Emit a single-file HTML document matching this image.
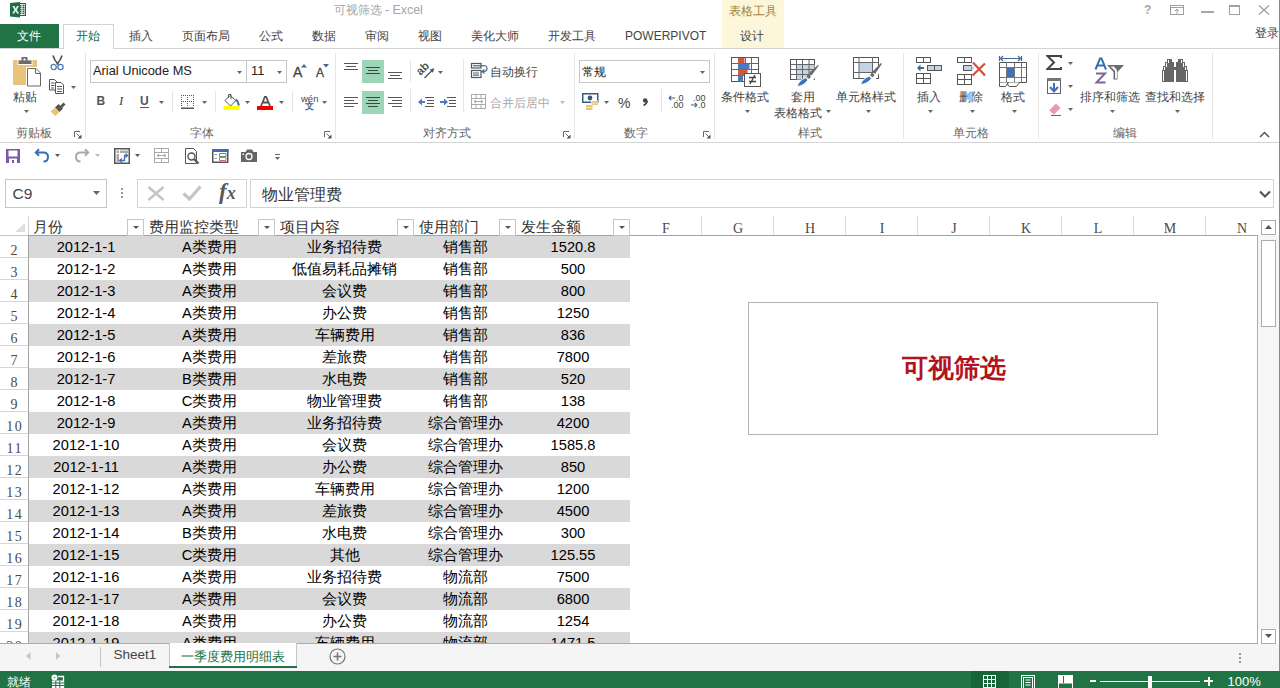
<!DOCTYPE html>
<html><head><meta charset="utf-8"><style>
html,body{margin:0;padding:0;width:1280px;height:688px;overflow:hidden;background:#fff;position:relative}
body>div,body>div>div{position:absolute}
.t{position:absolute;white-space:nowrap}
</style></head><body>
<svg style="position:absolute;left:6px;top:0px;" width="22" height="20" viewBox="0 0 22 20"><rect x="13.5" y="3.5" width="6" height="12" fill="#fff" stroke="#1d6b3e"/>
<path d="M14 5.5h1.5M16.5 5.5h2M14 7.5h1.5M16.5 7.5h2M14 9.5h1.5M16.5 9.5h2M14 11.5h1.5M16.5 11.5h2M14 13.5h1.5M16.5 13.5h2" stroke="#1d6b3e" stroke-width="1.3"/>
<path d="M4 3L14 2V17.5L4 16.5Z" fill="#1e6e41"/>
<path d="M6.3 6h2.1l1.3 2.4 1.3-2.4h2l-2.2 3.7 2.3 3.8h-2.1l-1.4-2.5-1.4 2.5h-2l2.3-3.8z" fill="#e6f5ea"/></svg>
<div class="t" style="left:333.5px;top:4px;font-size:12.4px;line-height:12.4px;color:#a5a5a5;font-family:'Liberation Sans',sans-serif;">可视筛选 - Excel</div>
<div style="left:722px;top:0px;width:62px;height:48px;background:#fcf6da"></div>
<div class="t" style="left:729px;top:5px;font-size:12px;line-height:12px;color:#a2843a;font-family:'Liberation Sans',sans-serif;">表格工具</div>
<div class="t" style="left:1144px;top:4px;font-size:12px;line-height:12px;color:#a6a6a6;font-family:'Liberation Sans',sans-serif;font-weight:bold">?</div>
<svg style="position:absolute;left:1170px;top:5px;" width="14" height="10" viewBox="0 0 14 10"><rect x="0.5" y="0.5" width="13" height="9" fill="none" stroke="#a0a0a0"/><path d="M0.5 2.5h13" stroke="#a0a0a0"/><path d="M7 4v5M5 6l2-2 2 2" stroke="#a0a0a0" fill="none"/></svg>
<div style="left:1201px;top:11px;width:13px;height:1.5px;background:#a6a6a6"></div>
<svg style="position:absolute;left:1229px;top:5px;" width="11" height="10" viewBox="0 0 11 10"><rect x="0.5" y="0.5" width="10" height="9" fill="none" stroke="#a0a0a0"/><rect x="0" y="0" width="11" height="2" fill="#a0a0a0"/></svg>
<svg style="position:absolute;left:1258px;top:5px;" width="12" height="10" viewBox="0 0 12 10"><path d="M1 0.5L11 9.5M11 0.5L1 9.5" stroke="#a0a0a0" stroke-width="1.3"/></svg>
<div style="left:0px;top:24px;width:59px;height:25px;background:#217346"></div>
<div class="t" style="left:17px;top:30px;font-size:12px;line-height:12px;color:#fff;font-family:'Liberation Sans',sans-serif;">文件</div>
<div style="left:63px;top:24px;width:51px;height:25px;background:#fff;border:1px solid #d4d4d4;border-bottom:none;box-sizing:border-box"></div>
<div class="t" style="left:76px;top:29.5px;font-size:12px;line-height:12px;color:#1f6a40;font-family:'Liberation Sans',sans-serif;">开始</div>
<div class="t" style="left:128.5px;top:30px;font-size:12px;line-height:12px;color:#444;font-family:'Liberation Sans',sans-serif;">插入</div>
<div class="t" style="left:182px;top:30px;font-size:12px;line-height:12px;color:#444;font-family:'Liberation Sans',sans-serif;">页面布局</div>
<div class="t" style="left:259px;top:30px;font-size:12px;line-height:12px;color:#444;font-family:'Liberation Sans',sans-serif;">公式</div>
<div class="t" style="left:312px;top:30px;font-size:12px;line-height:12px;color:#444;font-family:'Liberation Sans',sans-serif;">数据</div>
<div class="t" style="left:365px;top:30px;font-size:12px;line-height:12px;color:#444;font-family:'Liberation Sans',sans-serif;">审阅</div>
<div class="t" style="left:418px;top:30px;font-size:12px;line-height:12px;color:#444;font-family:'Liberation Sans',sans-serif;">视图</div>
<div class="t" style="left:471px;top:30px;font-size:12px;line-height:12px;color:#444;font-family:'Liberation Sans',sans-serif;">美化大师</div>
<div class="t" style="left:548px;top:30px;font-size:12px;line-height:12px;color:#444;font-family:'Liberation Sans',sans-serif;">开发工具</div>
<div class="t" style="left:740px;top:30px;font-size:12px;line-height:12px;color:#444;font-family:'Liberation Sans',sans-serif;">设计</div>
<div class="t" style="left:625px;top:30px;font-size:12px;line-height:12px;color:#444;font-family:'Liberation Sans',sans-serif;">POWERPIVOT</div>
<div class="t" style="left:1255px;top:27px;font-size:12px;line-height:12px;color:#444;font-family:'Liberation Sans',sans-serif;">登录</div>
<div style="left:0px;top:48px;width:63px;height:1px;background:#d4d4d4"></div>
<div style="left:114px;top:48px;width:1166px;height:1px;background:#d4d4d4"></div>
<div style="left:0px;top:142px;width:1279px;height:1px;background:#d4d4d4"></div>
<div style="left:1279px;top:0px;width:1px;height:671px;background:#8a8a8a"></div>
<div style="left:85px;top:53px;width:1px;height:86px;background:#e6e6e6"></div>
<div style="left:335px;top:53px;width:1px;height:86px;background:#e6e6e6"></div>
<div style="left:574px;top:53px;width:1px;height:86px;background:#e6e6e6"></div>
<div style="left:714px;top:53px;width:1px;height:86px;background:#e6e6e6"></div>
<div style="left:903px;top:53px;width:1px;height:86px;background:#e6e6e6"></div>
<div style="left:1038px;top:53px;width:1px;height:86px;background:#e6e6e6"></div>
<div style="left:1212px;top:53px;width:1px;height:86px;background:#e6e6e6"></div>
<div class="t" style="left:16px;top:127px;font-size:12px;line-height:12px;color:#666;font-family:'Liberation Sans',sans-serif;">剪贴板</div>
<div class="t" style="left:190px;top:127px;font-size:12px;line-height:12px;color:#666;font-family:'Liberation Sans',sans-serif;">字体</div>
<div class="t" style="left:423px;top:127px;font-size:12px;line-height:12px;color:#666;font-family:'Liberation Sans',sans-serif;">对齐方式</div>
<div class="t" style="left:624px;top:127px;font-size:12px;line-height:12px;color:#666;font-family:'Liberation Sans',sans-serif;">数字</div>
<div class="t" style="left:797.5px;top:127px;font-size:12px;line-height:12px;color:#666;font-family:'Liberation Sans',sans-serif;">样式</div>
<div class="t" style="left:953px;top:127px;font-size:12px;line-height:12px;color:#666;font-family:'Liberation Sans',sans-serif;">单元格</div>
<div class="t" style="left:1113px;top:127px;font-size:12px;line-height:12px;color:#666;font-family:'Liberation Sans',sans-serif;">编辑</div>
<svg style="position:absolute;left:74px;top:131px;" width="8" height="8" viewBox="0 0 8 8"><path d="M0.5 6V0.5H6" stroke="#666" fill="none"/><path d="M2.5 2.5L6 6" stroke="#666"/><path d="M7.5 3.5V7.5H3.5Z" fill="#555"/></svg>
<svg style="position:absolute;left:324px;top:131px;" width="8" height="8" viewBox="0 0 8 8"><path d="M0.5 6V0.5H6" stroke="#666" fill="none"/><path d="M2.5 2.5L6 6" stroke="#666"/><path d="M7.5 3.5V7.5H3.5Z" fill="#555"/></svg>
<svg style="position:absolute;left:563px;top:131px;" width="8" height="8" viewBox="0 0 8 8"><path d="M0.5 6V0.5H6" stroke="#666" fill="none"/><path d="M2.5 2.5L6 6" stroke="#666"/><path d="M7.5 3.5V7.5H3.5Z" fill="#555"/></svg>
<svg style="position:absolute;left:703px;top:131px;" width="8" height="8" viewBox="0 0 8 8"><path d="M0.5 6V0.5H6" stroke="#666" fill="none"/><path d="M2.5 2.5L6 6" stroke="#666"/><path d="M7.5 3.5V7.5H3.5Z" fill="#555"/></svg>
<svg style="position:absolute;left:12px;top:56px;" width="30" height="32" viewBox="0 0 30 32"><rect x="1" y="4" width="24" height="25" fill="#eac37a"/>
<path d="M5.5 4.5h15v4.5h-15z" fill="#fff"/><path d="M6.5 4.5h13v3.5h-13z" fill="#6b6b6b"/>
<rect x="9.5" y="1" width="6" height="4" fill="#6b6b6b"/><rect x="11.5" y="2.5" width="2" height="2" fill="#fff"/>
<path d="M14 11h10.5l5 5v16h-15.5z" fill="#fff"/>
<path d="M15.5 12.5h8.5l4.5 4.5v13h-13z" fill="#fff" stroke="#666"/><path d="M23.5 12.5v5h5" fill="none" stroke="#666"/></svg>
<div class="t" style="left:13px;top:91px;font-size:12px;line-height:12px;color:#444;font-family:'Liberation Sans',sans-serif;">粘贴</div>
<svg style="position:absolute;left:24px;top:110px;" width="5" height="3" viewBox="0 0 5 3"><path d="M0 0H5L2.5 3Z" fill="#666"/></svg>
<svg style="position:absolute;left:50px;top:55px;" width="15" height="16" viewBox="0 0 15 16"><path d="M3 0.5Q4 5 8.5 9.5M12 0.5Q11 5 6.5 9.5" stroke="#505050" stroke-width="1.6" fill="none"/>
<circle cx="3.7" cy="12" r="2.6" fill="#fff" stroke="#4a7bbd" stroke-width="1.3"/><circle cx="10.5" cy="12" r="2.6" fill="#fff" stroke="#4a7bbd" stroke-width="1.3"/></svg>
<svg style="position:absolute;left:49px;top:79px;" width="16" height="15" viewBox="0 0 16 15"><path d="M0.5 0.5h5l2.5 2.5v8h-7.5z" fill="#fff" stroke="#555"/><path d="M2 4h3.5M2 6.5h3.5M2 9h3" stroke="#555"/>
<path d="M6.5 3.5h5.5l2.5 2.5v8.5h-8z" fill="#fff" stroke="#555"/><path d="M8 7.5h5M8 10h5M8 12.5h5" stroke="#555"/></svg>
<svg style="position:absolute;left:71px;top:86px;" width="5" height="3" viewBox="0 0 5 3"><path d="M0 0H5L2.5 3Z" fill="#666"/></svg>
<svg style="position:absolute;left:50px;top:101px;" width="16" height="15" viewBox="0 0 16 15"><path d="M9.5 5.5L13.5 1.5L15.5 3.5L11.5 7.5Z" fill="#555"/><path d="M5 6.5L8.5 3L13 7.5L9.5 11Z" fill="#555"/>
<path d="M0.5 10.5L5 6.5L9.5 11L5.5 15Z" fill="#eac37a"/></svg>
<div style="left:90px;top:60px;width:157px;height:23px;background:#fff;border:1px solid #c6c6c6;box-sizing:border-box"></div>
<div style="left:246px;top:60px;width:41px;height:23px;background:#fff;border:1px solid #c6c6c6;box-sizing:border-box"></div>
<div class="t" style="left:93px;top:65px;font-size:12.8px;line-height:12.8px;color:#222;font-family:'Liberation Sans',sans-serif;">Arial Unicode MS</div>
<svg style="position:absolute;left:237px;top:71px;" width="5" height="3" viewBox="0 0 5 3"><path d="M0 0H5L2.5 3Z" fill="#666"/></svg>
<div class="t" style="left:251px;top:65px;font-size:12.8px;line-height:12.8px;color:#222;font-family:'Liberation Sans',sans-serif;">11</div>
<svg style="position:absolute;left:277px;top:71px;" width="5" height="3" viewBox="0 0 5 3"><path d="M0 0H5L2.5 3Z" fill="#666"/></svg>
<div class="t" style="left:293px;top:65px;font-size:14px;line-height:14px;color:#444;font-family:'Liberation Sans',sans-serif;-webkit-text-stroke:0.3px #444">A</div>
<svg style="position:absolute;left:301px;top:63.5px" width="6" height="4"><path d="M0 3.5H6L3 0Z" fill="#44678f"/></svg>
<div class="t" style="left:316px;top:67px;font-size:12px;line-height:12px;color:#444;font-family:'Liberation Sans',sans-serif;-webkit-text-stroke:0.3px #444">A</div>
<svg style="position:absolute;left:322.5px;top:64px" width="6" height="4"><path d="M0 0H6L3 3.5Z" fill="#44678f"/></svg>
<div class="t" style="left:96.5px;top:95px;font-size:12px;line-height:12px;color:#555;font-family:'Liberation Sans',sans-serif;font-weight:bold">B</div>
<div class="t" style="left:119px;top:95px;font-size:12px;line-height:12px;color:#444;font-family:'Liberation Sans',sans-serif;font-style:italic;font-family:Liberation Serif,serif;font-size:13px">I</div>
<div class="t" style="left:140px;top:95px;font-size:12px;line-height:12px;color:#555;font-family:'Liberation Sans',sans-serif;font-weight:bold">U</div>
<div style="left:140px;top:107px;width:9px;height:1px;background:#555"></div>
<svg style="position:absolute;left:159px;top:101px;" width="5" height="3" viewBox="0 0 5 3"><path d="M0 0H5L2.5 3Z" fill="#666"/></svg>
<div style="left:172px;top:91px;width:1px;height:21px;background:#e6e6e6"></div>
<svg style="position:absolute;left:181px;top:95px;" width="14" height="14" viewBox="0 0 14 14"><rect x="12" y="4" width="1" height="1" fill="#555"/><rect x="4" y="0" width="1" height="1" fill="#555"/><rect x="12" y="10" width="1" height="1" fill="#555"/><rect x="4" y="6" width="1" height="1" fill="#555"/><rect x="8" y="0" width="1" height="1" fill="#555"/><rect x="0" y="2" width="1" height="1" fill="#555"/><rect x="10" y="0" width="1" height="1" fill="#555"/><rect x="10" y="6" width="1" height="1" fill="#555"/><rect x="8" y="6" width="1" height="1" fill="#555"/><rect x="0" y="8" width="1" height="1" fill="#555"/><rect x="6" y="2" width="1" height="1" fill="#555"/><rect x="12" y="0" width="1" height="1" fill="#555"/><rect x="6" y="8" width="1" height="1" fill="#555"/><rect x="12" y="6" width="1" height="1" fill="#555"/><rect x="0" y="4" width="1" height="1" fill="#555"/><rect x="0" y="10" width="1" height="1" fill="#555"/><rect x="6" y="4" width="1" height="1" fill="#555"/><rect x="12" y="2" width="1" height="1" fill="#555"/><rect x="6" y="10" width="1" height="1" fill="#555"/><rect x="12" y="8" width="1" height="1" fill="#555"/><rect x="0" y="0" width="1" height="1" fill="#555"/><rect x="2" y="0" width="1" height="1" fill="#555"/><rect x="0" y="6" width="1" height="1" fill="#555"/><rect x="2" y="6" width="1" height="1" fill="#555"/><rect x="6" y="0" width="1" height="1" fill="#555"/><rect x="6" y="6" width="1" height="1" fill="#555"/><rect x="0" y="12.5" width="13" height="1.5" fill="#555"/></svg>
<svg style="position:absolute;left:202px;top:101px;" width="5" height="3" viewBox="0 0 5 3"><path d="M0 0H5L2.5 3Z" fill="#666"/></svg>
<div style="left:215px;top:91px;width:1px;height:21px;background:#e6e6e6"></div>
<svg style="position:absolute;left:223px;top:93px;" width="17" height="17" viewBox="0 0 17 17"><path d="M2 7.5L7 2.5L13 7.5L7.5 13Z" fill="#fff" stroke="#555"/><path d="M5.5 5V1.5h2.5V6" stroke="#555" fill="none"/><path d="M13 6.5q3 2.5 2.5 6" stroke="#4a6f9a" stroke-width="2.2" fill="none"/><rect x="0.5" y="13" width="16" height="4" fill="#ffff00"/></svg>
<svg style="position:absolute;left:245px;top:101px;" width="5" height="3" viewBox="0 0 5 3"><path d="M0 0H5L2.5 3Z" fill="#666"/></svg>
<svg style="position:absolute;left:257px;top:96px;" width="16" height="14" viewBox="0 0 16 14"><path d="M4 10L8 0.5H9L13 10M5.5 6.5h6" stroke="#555" stroke-width="1.8" fill="none"/><rect x="0" y="10" width="16" height="4" fill="#e00"/></svg>
<svg style="position:absolute;left:279px;top:101px;" width="5" height="3" viewBox="0 0 5 3"><path d="M0 0H5L2.5 3Z" fill="#666"/></svg>
<div style="left:292px;top:91px;width:1px;height:21px;background:#e6e6e6"></div>
<div class="t" style="left:301px;top:93.5px;font-size:9.5px;line-height:9.5px;color:#444;font-family:'Liberation Sans',sans-serif;">wén</div>
<div class="t" style="left:304.5px;top:102px;font-size:9px;line-height:9px;color:#44678f;font-family:'Liberation Sans',sans-serif;font-weight:bold">文</div>
<svg style="position:absolute;left:322px;top:101px;" width="5" height="3" viewBox="0 0 5 3"><path d="M0 0H5L2.5 3Z" fill="#666"/></svg>
<div style="left:344.0px;top:63px;width:14px;height:1px;background:#555"></div>
<div style="left:346.0px;top:66px;width:10px;height:1px;background:#555"></div>
<div style="left:344.0px;top:69px;width:14px;height:1px;background:#555"></div>
<div style="left:362px;top:60px;width:22px;height:23px;background:#9fd5b7"></div>
<div style="left:366.0px;top:67px;width:14px;height:1px;background:#3a4a40"></div>
<div style="left:368.0px;top:70px;width:10px;height:1px;background:#3a4a40"></div>
<div style="left:366.0px;top:73px;width:14px;height:1px;background:#3a4a40"></div>
<div style="left:388.0px;top:72px;width:14px;height:1px;background:#555"></div>
<div style="left:390.0px;top:75px;width:10px;height:1px;background:#555"></div>
<div style="left:388.0px;top:78px;width:14px;height:1px;background:#555"></div>
<div style="left:344px;top:97px;width:14px;height:1px;background:#555"></div>
<div style="left:344px;top:100px;width:10px;height:1px;background:#555"></div>
<div style="left:344px;top:103px;width:14px;height:1px;background:#555"></div>
<div style="left:344px;top:106px;width:10px;height:1px;background:#555"></div>
<div style="left:362px;top:91px;width:22px;height:23px;background:#9fd5b7"></div>
<div style="left:366.0px;top:97px;width:14px;height:1px;background:#3a4a40"></div>
<div style="left:368.0px;top:100px;width:10px;height:1px;background:#3a4a40"></div>
<div style="left:366.0px;top:103px;width:14px;height:1px;background:#3a4a40"></div>
<div style="left:368.0px;top:106px;width:10px;height:1px;background:#3a4a40"></div>
<div style="left:388px;top:97px;width:14px;height:1px;background:#555"></div>
<div style="left:392px;top:100px;width:10px;height:1px;background:#555"></div>
<div style="left:388px;top:103px;width:14px;height:1px;background:#555"></div>
<div style="left:392px;top:106px;width:10px;height:1px;background:#555"></div>
<div style="left:410px;top:60px;width:1px;height:22px;background:#e6e6e6"></div>
<div style="left:410px;top:89px;width:1px;height:23px;background:#e6e6e6"></div>
<svg style="position:absolute;left:417px;top:62px;" width="19" height="17" viewBox="0 0 19 17"><g transform="translate(3.5,14) rotate(-45)"><text x="0" y="0" font-size="11.5" font-family="Liberation Sans" fill="#555" style="font-weight:bold">ab</text></g><path d="M7.5 16L16 7.5" stroke="#555" stroke-width="1.3"/><path d="M17.3 6.2L12.7 7.6L15.9 10.8Z" fill="#555"/></svg>
<svg style="position:absolute;left:438px;top:71px;" width="5" height="3" viewBox="0 0 5 3"><path d="M0 0H5L2.5 3Z" fill="#666"/></svg>
<svg style="position:absolute;left:418px;top:97px;" width="16" height="10" viewBox="0 0 16 10"><path d="M7 0.5h9M9 3.5h7M9 6.5h7M7 9.5h9" stroke="#555"/><path d="M0 5L4 1.5V8.5Z" fill="#4a7bbd"/><path d="M3 5h4" stroke="#4a7bbd" stroke-width="2"/></svg>
<svg style="position:absolute;left:440px;top:97px;" width="16" height="10" viewBox="0 0 16 10"><path d="M7 0.5h9M9 3.5h7M9 6.5h7M7 9.5h9" stroke="#555"/><path d="M8 5L4 1.5V8.5Z" fill="#4a7bbd"/><path d="M0 5h5" stroke="#4a7bbd" stroke-width="2"/></svg>
<div style="left:463px;top:59px;width:1px;height:53px;background:#e6e6e6"></div>
<svg style="position:absolute;left:470px;top:62px;" width="18" height="17" viewBox="0 0 18 17"><rect x="1.5" y="1.5" width="9.5" height="4.5" fill="#fff" stroke="#555" stroke-width="1.2"/><path d="M3 3.75h12.5" stroke="#44678f" stroke-width="1.2"/><rect x="1.5" y="8.5" width="9.5" height="7" fill="#fff" stroke="#555" stroke-width="1.2"/><path d="M3 11h6M3 13.2h6" stroke="#44678f" stroke-width="1.2"/><path d="M15.5 3.75Q17 4 17 6.5Q17 9.5 13.5 9.5H12.5" stroke="#44678f" stroke-width="1.2" fill="none"/><path d="M14.5 7.5L12 9.5L14.5 11.5" stroke="#44678f" stroke-width="1.2" fill="none"/></svg>
<div class="t" style="left:490px;top:65.5px;font-size:12px;line-height:12px;color:#444;font-family:'Liberation Sans',sans-serif;">自动换行</div>
<svg style="position:absolute;left:471px;top:94px;" width="15" height="15" viewBox="0 0 15 15"><rect x="0.5" y="0.5" width="14" height="14" fill="#fff" stroke="#aaa"/><path d="M0.5 4.5h14M0.5 10.5h14M5 0.5v4M10 0.5v4M5 10.5v4M10 10.5v4M3 7.5h9M3 7.5l2-1.5M3 7.5l2 1.5M12 7.5l-2-1.5M12 7.5l-2 1.5" stroke="#aaa" fill="none"/></svg>
<div class="t" style="left:490px;top:97px;font-size:12px;line-height:12px;color:#a8a8a8;font-family:'Liberation Sans',sans-serif;">合并后居中</div>
<svg style="position:absolute;left:560px;top:101px;" width="5" height="3" viewBox="0 0 5 3"><path d="M0 0H5L2.5 3Z" fill="#bbb"/></svg>
<div style="left:579px;top:60px;width:131px;height:23px;background:#fff;border:1px solid #c6c6c6;box-sizing:border-box"></div>
<div class="t" style="left:582px;top:66px;font-size:12px;line-height:12px;color:#222;font-family:'Liberation Sans',sans-serif;">常规</div>
<svg style="position:absolute;left:700px;top:71px;" width="5" height="3" viewBox="0 0 5 3"><path d="M0 0H5L2.5 3Z" fill="#666"/></svg>
<svg style="position:absolute;left:582px;top:93px;" width="17" height="18" viewBox="0 0 17 18"><rect x="0.75" y="0.75" width="15" height="8.5" fill="#fff" stroke="#3a5a80" stroke-width="1.5"/><circle cx="8" cy="5" r="2.4" fill="#3a5a80"/><rect x="9" y="7.5" width="7" height="4.5" fill="#fff"/><rect x="9.5" y="8" width="6.5" height="4" fill="#e8c37a"/><rect x="3.5" y="11.5" width="7" height="6" fill="#fff"/><rect x="4" y="12" width="6.5" height="5" fill="#e8c37a"/><path d="M9.5 10h6.5M4 14.5h6.5" stroke="#fbeecf" stroke-width="0.8"/></svg>
<svg style="position:absolute;left:604px;top:101px;" width="5" height="3" viewBox="0 0 5 3"><path d="M0 0H5L2.5 3Z" fill="#666"/></svg>
<div class="t" style="left:618px;top:96px;font-size:14px;line-height:14px;color:#444;font-family:'Liberation Sans',sans-serif;">%</div>
<svg style="position:absolute;left:642px;top:98px;" width="6" height="8" viewBox="0 0 6 8"><circle cx="3.2" cy="2.5" r="2.3" fill="#444"/><path d="M5.2 3Q5 6 1.5 7.5" stroke="#444" stroke-width="1.6" fill="none"/></svg>
<div style="left:661px;top:89px;width:1px;height:23px;background:#e6e6e6"></div>
<svg style="position:absolute;left:668px;top:94px;" width="17" height="15" viewBox="0 0 17 15"><text x="8" y="7" font-size="9" font-family="Liberation Sans" fill="#444">.0</text><text x="3" y="14" font-size="9" font-family="Liberation Sans" fill="#444">.00</text><path d="M1 4h6M1 4l2.2-2.2M1 4l2.2 2.2" stroke="#44678f" stroke-width="1.2" fill="none"/></svg>
<svg style="position:absolute;left:690px;top:94px;" width="17" height="15" viewBox="0 0 17 15"><text x="3" y="7" font-size="9" font-family="Liberation Sans" fill="#444">.00</text><text x="8" y="14" font-size="9" font-family="Liberation Sans" fill="#444">.0</text><path d="M1 11h6M7 11l-2.2-2.2M7 11l-2.2 2.2" stroke="#44678f" stroke-width="1.2" fill="none"/></svg>
<svg style="position:absolute;left:730px;top:56px;" width="32" height="32" viewBox="0 0 32 32"><rect x="1.5" y="1.5" width="27" height="24" fill="#fff" stroke="#555"/>
<path d="M1.5 7.5h27M1.5 13.5h27M1.5 19.5h27M8.5 1.5v24M15.5 1.5v24M21.5 1.5v24" stroke="#666"/>
<rect x="8" y="2" width="6.5" height="5.5" fill="#d5573b"/><rect x="8" y="8" width="11.5" height="5.5" fill="#4a7bbd"/><rect x="8" y="14" width="9.5" height="5.5" fill="#d5573b"/><rect x="8" y="20" width="5" height="5.5" fill="#4a7bbd"/>
<rect x="14.5" y="17.5" width="16" height="13" fill="#fff" stroke="#555"/>
<path d="M19 21.5h7M19 25.5h7M25 19L20 28" stroke="#444" stroke-width="1.3"/></svg>
<div class="t" style="left:721px;top:91px;font-size:12px;line-height:12px;color:#444;font-family:'Liberation Sans',sans-serif;">条件格式</div>
<svg style="position:absolute;left:745px;top:110px;" width="5" height="3" viewBox="0 0 5 3"><path d="M0 0H5L2.5 3Z" fill="#666"/></svg>
<svg style="position:absolute;left:789px;top:58px;" width="32" height="30" viewBox="0 0 32 30"><rect x="1.5" y="1.5" width="24" height="20" fill="#fff" stroke="#555"/>
<rect x="7.5" y="6.5" width="18" height="15" fill="#c5d3e3"/>
<path d="M1.5 6.5h24M1.5 11.5h24M1.5 16.5h24M7.5 1.5v20M13.5 1.5v20M20 1.5v20" stroke="#666"/>
<path d="M18 22L22 26L30 12V5Z" fill="#fff"/>
<path d="M22.5 17.5L29.5 8V6.5L20 15Z" fill="#6b6b6b"/><path d="M19.5 16L22 18.5L20 21L17.5 18.5Z" fill="#6b6b6b"/>
<path d="M17 19.5Q10 22 8 28.5Q15 28 19 22Z" fill="#3d72b5" stroke="#fff" stroke-width="1"/></svg>
<div class="t" style="left:791px;top:91px;font-size:12px;line-height:12px;color:#444;font-family:'Liberation Sans',sans-serif;">套用</div>
<div class="t" style="left:774px;top:107px;font-size:12px;line-height:12px;color:#444;font-family:'Liberation Sans',sans-serif;">表格格式</div>
<svg style="position:absolute;left:826px;top:110px;" width="5" height="3" viewBox="0 0 5 3"><path d="M0 0H5L2.5 3Z" fill="#666"/></svg>
<svg style="position:absolute;left:852px;top:56px;" width="32" height="30" viewBox="0 0 32 30"><rect x="1.5" y="1.5" width="25" height="21" fill="#fff" stroke="#555"/>
<rect x="7" y="6.5" width="13.5" height="10" fill="#c5d3e3"/>
<path d="M1.5 6.5h25M1.5 16.5h25M7 1.5v21M20.5 1.5v21" stroke="#666"/>
<path d="M18 22L22 26L30 12V5Z" fill="#fff"/>
<path d="M23 18L29.5 8.5V6.5L20.5 15.5Z" fill="#6b6b6b"/><path d="M20 16.5L22.5 19L20.5 21.5L18 19Z" fill="#6b6b6b"/>
<path d="M17.5 20Q10.5 22.5 8.5 28.5Q15.5 28 19.5 22.5Z" fill="#3d72b5" stroke="#fff" stroke-width="1"/></svg>
<div class="t" style="left:836px;top:91px;font-size:12px;line-height:12px;color:#444;font-family:'Liberation Sans',sans-serif;">单元格样式</div>
<svg style="position:absolute;left:866px;top:110px;" width="5" height="3" viewBox="0 0 5 3"><path d="M0 0H5L2.5 3Z" fill="#666"/></svg>
<svg style="position:absolute;left:915px;top:56px;" width="28" height="29" viewBox="0 0 28 29"><rect x="1.5" y="1.5" width="14" height="5" fill="#fff" stroke="#555"/><path d="M8.5 1.5v5" stroke="#555"/>
<rect x="12.5" y="9.5" width="14" height="5" fill="#c5d3e3" stroke="#555"/><path d="M19.5 9.5v5" stroke="#555"/>
<path d="M3 12h6" stroke="#44678f" stroke-width="2"/><path d="M2 12L5.5 8.5V15.5Z" fill="#44678f"/>
<rect x="1.5" y="17.5" width="14" height="10" fill="#fff" stroke="#555"/><path d="M1.5 22.5h14M8.5 17.5v10" stroke="#555"/></svg>
<div class="t" style="left:917px;top:91px;font-size:12px;line-height:12px;color:#444;font-family:'Liberation Sans',sans-serif;">插入</div>
<svg style="position:absolute;left:928px;top:110px;" width="5" height="3" viewBox="0 0 5 3"><path d="M0 0H5L2.5 3Z" fill="#666"/></svg>
<svg style="position:absolute;left:956px;top:56px;" width="31" height="30" viewBox="0 0 31 30"><rect x="1.5" y="1.5" width="14" height="5" fill="#fff" stroke="#555"/><path d="M8.5 1.5v5" stroke="#555"/>
<rect x="7.5" y="9.5" width="8" height="5" fill="#c5d3e3" stroke="#555"/><path d="M15.5 9.5L19 12L15.5 14.5" fill="#c5d3e3"/>
<rect x="1.5" y="18.5" width="14" height="10" fill="#fff" stroke="#555"/><path d="M1.5 23.5h14M8.5 18.5v10" stroke="#555"/>
<path d="M17 6.5L29 19.5M29 7.5L16.5 19.5" stroke="#d5503e" stroke-width="2.3"/></svg>
<div class="t" style="left:959px;top:91px;font-size:12px;line-height:12px;color:#444;font-family:'Liberation Sans',sans-serif;">删除</div>
<svg style="position:absolute;left:970px;top:110px;" width="5" height="3" viewBox="0 0 5 3"><path d="M0 0H5L2.5 3Z" fill="#666"/></svg>
<svg style="position:absolute;left:998px;top:55px;" width="30" height="32" viewBox="0 0 30 32"><path d="M1.5 1v5M23.5 1v5M2 3.5h21" stroke="#44678f" stroke-width="1.2"/><path d="M5 1L2.5 3.5L5 6M20 1L22.5 3.5L20 6" stroke="#44678f" stroke-width="1.2" fill="none"/>
<path d="M1.5 7.5h27v20h-27z" fill="#fff" stroke="#555"/>
<path d="M1.5 12.5h27M1.5 22.5h27M8.5 7.5v20M16.5 7.5v20M23.5 7.5v20" stroke="#777"/>
<rect x="9" y="13" width="7" height="9" fill="#3d72b5"/>
<path d="M1.5 27.5v4h6l3-4M9.5 27.5q0 4 2 4h7l3-4" stroke="#555" fill="#fff"/></svg>
<div class="t" style="left:1001px;top:91px;font-size:12px;line-height:12px;color:#444;font-family:'Liberation Sans',sans-serif;">格式</div>
<svg style="position:absolute;left:1012px;top:110px;" width="5" height="3" viewBox="0 0 5 3"><path d="M0 0H5L2.5 3Z" fill="#666"/></svg>
<svg style="position:absolute;left:1046px;top:55px;" width="16" height="15" viewBox="0 0 16 15"><path d="M15 3V1H1.5L8 7.5L1.5 14H15V12" stroke="#444" stroke-width="2" fill="none" stroke-linejoin="miter"/></svg>
<svg style="position:absolute;left:1068px;top:62px;" width="5" height="3" viewBox="0 0 5 3"><path d="M0 0H5L2.5 3Z" fill="#666"/></svg>
<svg style="position:absolute;left:1047px;top:78px;" width="15" height="17" viewBox="0 0 15 17"><rect x="0.5" y="0.5" width="13" height="15" fill="#fff" stroke="#666"/><rect x="0" y="0" width="14" height="3" fill="#777"/><path d="M7 5v8" stroke="#3d72b5" stroke-width="2"/><path d="M3 9l4 4.5 4-4.5" stroke="#3d72b5" stroke-width="2" fill="none"/></svg>
<svg style="position:absolute;left:1068px;top:85px;" width="5" height="3" viewBox="0 0 5 3"><path d="M0 0H5L2.5 3Z" fill="#666"/></svg>
<svg style="position:absolute;left:1047px;top:101px;" width="15" height="15" viewBox="0 0 15 15"><path d="M2 9.5L9 2.5L13.5 7L6.5 14Z" fill="#eb99ad"/><path d="M2 9.5L6.5 14" stroke="#fff" stroke-width="1"/><path d="M4 14.5h10" stroke="#666"/></svg>
<svg style="position:absolute;left:1068px;top:108px;" width="5" height="3" viewBox="0 0 5 3"><path d="M0 0H5L2.5 3Z" fill="#666"/></svg>
<svg style="position:absolute;left:1094px;top:57px;" width="31" height="28" viewBox="0 0 31 28"><path d="M1.5 12.5L6 1.5H7.5L12 12.5M3.5 8.5h6.5" stroke="#3a6fb7" stroke-width="2" fill="none"/>
<path d="M2 16.5h9L2.5 25.5h9" stroke="#8064a2" stroke-width="2" fill="none"/>
<path d="M13 8h17l-6.5 7v7.5h-4V15z" fill="#6b6b6b"/><path d="M16.5 9.5h3.5l3 3.5v8.5h-2V14z" fill="#fff" opacity="0.9"/></svg>
<div class="t" style="left:1080px;top:91px;font-size:12px;line-height:12px;color:#444;font-family:'Liberation Sans',sans-serif;">排序和筛选</div>
<svg style="position:absolute;left:1110px;top:110px;" width="5" height="3" viewBox="0 0 5 3"><path d="M0 0H5L2.5 3Z" fill="#666"/></svg>
<svg style="position:absolute;left:1161px;top:58px;" width="28" height="25" viewBox="0 0 28 25"><rect x="6" y="1" width="5" height="4" fill="#666"/><rect x="17" y="1" width="5" height="4" fill="#666"/>
<rect x="4" y="4" width="9" height="5" fill="#666"/><rect x="15" y="4" width="9" height="5" fill="#666"/>
<rect x="2" y="8" width="11" height="5" fill="#666"/><rect x="15" y="8" width="11" height="5" fill="#666"/>
<rect x="1" y="12" width="12" height="12" fill="#666"/><rect x="15" y="12" width="12" height="12" fill="#666"/>
<rect x="12" y="9" width="4" height="3" fill="#666"/>
<path d="M2.5 13v10M5.5 5v4M25.5 13v10M22.5 5v4M7.5 2v3M20.5 2v3M3.5 9v3M24.5 9v3" stroke="#fff"/></svg>
<div class="t" style="left:1145px;top:91px;font-size:12px;line-height:12px;color:#444;font-family:'Liberation Sans',sans-serif;">查找和选择</div>
<svg style="position:absolute;left:1175px;top:110px;" width="5" height="3" viewBox="0 0 5 3"><path d="M0 0H5L2.5 3Z" fill="#666"/></svg>
<svg style="position:absolute;left:1259px;top:131px;" width="11" height="7" viewBox="0 0 11 7"><path d="M1 6L5.5 1.5L10 6" stroke="#555" stroke-width="1.5" fill="none"/></svg>
<svg style="position:absolute;left:6px;top:149px;" width="14" height="14" viewBox="0 0 14 14"><path d="M0 0h14v14H0z" fill="#7b59a4"/><rect x="2.5" y="1.5" width="9" height="6" fill="#fff"/><rect x="3" y="9.5" width="8" height="4.5" fill="#fff"/><rect x="6" y="11" width="2" height="3" fill="#7b59a4"/></svg>
<svg style="position:absolute;left:34px;top:148px;" width="16" height="15" viewBox="0 0 16 15"><path d="M5 1.2L1.8 4.5L5 7.8" stroke="#3a6fb7" stroke-width="2" fill="none"/><path d="M2.5 4.5h7q4.5 0 4.5 4.5t-4.5 4.5" stroke="#3a6fb7" stroke-width="2" fill="none"/></svg>
<svg style="position:absolute;left:55px;top:154px;" width="5" height="3" viewBox="0 0 5 3"><path d="M0 0H5L2.5 3Z" fill="#555"/></svg>
<svg style="position:absolute;left:75px;top:148px;" width="15" height="15" viewBox="0 0 15 15"><path d="M10 1.2L13.2 4.5L10 7.8" stroke="#aaa" stroke-width="2" fill="none"/><path d="M12.5 4.5h-7q-4.5 0-4.5 4.5t4.5 4.5" stroke="#aaa" stroke-width="2" fill="none"/></svg>
<svg style="position:absolute;left:95px;top:154px;" width="5" height="3" viewBox="0 0 5 3"><path d="M0 0H5L2.5 3Z" fill="#bbb"/></svg>
<svg style="position:absolute;left:114px;top:148px;" width="17" height="16" viewBox="0 0 17 16"><rect x="0.75" y="0.75" width="14.5" height="14.5" fill="#fff" stroke="#555" stroke-width="1.5"/><rect x="2.5" y="2.5" width="2.5" height="2.5" fill="#aaa"/><rect x="6" y="2.5" width="8" height="2.5" fill="#aaa"/><rect x="2.5" y="6" width="2.5" height="8" fill="#aaa"/><path d="M6 12.5h4.5v-5h3" stroke="#3a6fb7" stroke-width="1.3" fill="none"/><path d="M8 10.5L5.5 12.5L8 14.5M11.5 5.5L13.5 7.5L11.5 9.5" stroke="#3a6fb7" stroke-width="1.2" fill="none"/></svg>
<svg style="position:absolute;left:135px;top:154px;" width="5" height="3" viewBox="0 0 5 3"><path d="M0 0H5L2.5 3Z" fill="#555"/></svg>
<svg style="position:absolute;left:154px;top:148px;" width="16" height="16" viewBox="0 0 16 16"><rect x="0.5" y="0.5" width="14" height="14" fill="#fff" stroke="#aaa"/><path d="M0.5 4.5h14M0.5 10.5h14M7.5 0.5v4M7.5 10.5v4M3 7.5h9M3 7.5l2-1.5M3 7.5l2 1.5M12 7.5l-2-1.5M12 7.5l-2 1.5" stroke="#aaa" fill="none"/></svg>
<svg style="position:absolute;left:184px;top:148px;" width="16" height="17" viewBox="0 0 16 17"><path d="M1.5 0.5h8l3 3v12h-11z" fill="#fff" stroke="#555"/><circle cx="7.5" cy="8.5" r="3.5" fill="#fff" stroke="#555" stroke-width="1.4"/><path d="M10 11L14.5 15.5" stroke="#555" stroke-width="2.2"/></svg>
<svg style="position:absolute;left:212px;top:149px;" width="17" height="14" viewBox="0 0 17 14"><rect x="0.75" y="0.75" width="15" height="12.5" fill="#fff" stroke="#555" stroke-width="1.5"/><rect x="0" y="0" width="16.5" height="3" fill="#3a6fb7"/><path d="M2.5 5.5h2.5M2.5 9.5h2.5" stroke="#999"/><path d="M7.5 4.5h6.5v3h-6.5z" stroke="#5a9a6a" fill="none"/><path d="M7.5 8.5h6.5v3h-6.5z" stroke="#d06a8a" fill="none"/></svg>
<svg style="position:absolute;left:241px;top:149px;" width="17" height="13" viewBox="0 0 17 13"><path d="M0 3h4.5l1.5-2.5h5L12.5 3H16v10H0z" fill="#666"/><circle cx="8" cy="7.5" r="3" fill="none" stroke="#fff" stroke-width="1.3"/><rect x="1.5" y="4.5" width="1.5" height="1.5" fill="#fff"/></svg>
<svg style="position:absolute;left:275px;top:154px;" width="6" height="7" viewBox="0 0 6 7"><path d="M0 0.5h5" stroke="#666"/><path d="M0 3H5L2.5 6Z" fill="#666"/></svg>
<div style="left:5px;top:179px;width:102px;height:29px;background:#fff;border:1px solid #c6c6c6;box-sizing:border-box"></div>
<div class="t" style="left:12.5px;top:186px;font-size:15.5px;line-height:15.5px;color:#444;font-family:'Liberation Sans',sans-serif;">C9</div>
<svg style="position:absolute;left:93px;top:191px;" width="7" height="4" viewBox="0 0 7 4"><path d="M0 0H7L3.5 4Z" fill="#666"/></svg>
<div style="left:121px;top:188px;width:2px;height:2px;background:#999"></div>
<div style="left:121px;top:192px;width:2px;height:2px;background:#999"></div>
<div style="left:121px;top:196px;width:2px;height:2px;background:#999"></div>
<div style="left:137px;top:179px;width:110px;height:29px;background:#fff;border:1px solid #d4d4d4;box-sizing:border-box"></div>
<svg style="position:absolute;left:147px;top:186px;" width="18" height="15" viewBox="0 0 18 15"><path d="M1.5 1L16.5 14M16.5 1L1.5 14" stroke="#c4c4c4" stroke-width="2.6"/></svg>
<svg style="position:absolute;left:182px;top:185px;" width="20" height="16" viewBox="0 0 20 16"><path d="M1.5 8.5L7.5 14L18.5 1.5" stroke="#c4c4c4" stroke-width="3.2" fill="none"/></svg>
<div class="t" style="left:219px;top:180px;font-size:23px;line-height:23px;color:#5a5a5a;font-family:'Liberation Sans',sans-serif;font-family:Liberation Serif,serif;font-weight:bold"><i>f</i><i style="font-size:18px">x</i></div>
<div style="left:250px;top:179px;width:1024px;height:29px;background:#fff;border:1px solid #d4d4d4;box-sizing:border-box"></div>
<div class="t" style="left:262px;top:186.5px;font-size:16px;line-height:16px;color:#333;font-family:'Liberation Sans',sans-serif;">物业管理费</div>
<svg style="position:absolute;left:1259px;top:190px;" width="12" height="9" viewBox="0 0 12 9"><path d="M1 1.5L6 6.5L11 1.5" stroke="#555" stroke-width="2.2" fill="none"/></svg>
<div style="left:0;top:0;width:1258px;height:643px;overflow:hidden;position:absolute">
<div style="left:28px;top:236px;width:602px;height:22px;background:#d9d9d9"></div>
<div style="left:0px;top:257px;width:28px;height:1px;background:#d6d6d6"></div>
<div class="t" style="left:0.75px;top:240px;width:28px;text-align:center;font-size:14px;line-height:22px;color:#4a4a4a;font-family:'Liberation Serif',serif;letter-spacing:1.5px">2</div>
<div class="t" style="left:8.0px;top:236px;width:156px;text-align:center;font-size:14.67px;line-height:22px;color:#000;font-family:'Liberation Sans',sans-serif;">2012-1-1</div>
<div class="t" style="left:124.0px;top:236px;width:171px;text-align:center;font-size:14.67px;line-height:22px;color:#000;font-family:'Liberation Sans',sans-serif;">A类费用</div>
<div class="t" style="left:255.0px;top:236px;width:179px;text-align:center;font-size:14.67px;line-height:22px;color:#000;font-family:'Liberation Sans',sans-serif;">业务招待费</div>
<div class="t" style="left:394.0px;top:236px;width:142px;text-align:center;font-size:14.67px;line-height:22px;color:#000;font-family:'Liberation Sans',sans-serif;">销售部</div>
<div class="t" style="left:496.0px;top:236px;width:154px;text-align:center;font-size:14.67px;line-height:22px;color:#000;font-family:'Liberation Sans',sans-serif;">1520.8</div>
<div style="left:0px;top:279px;width:28px;height:1px;background:#d6d6d6"></div>
<div class="t" style="left:0.75px;top:262px;width:28px;text-align:center;font-size:14px;line-height:22px;color:#4a4a4a;font-family:'Liberation Serif',serif;letter-spacing:1.5px">3</div>
<div class="t" style="left:8.0px;top:258px;width:156px;text-align:center;font-size:14.67px;line-height:22px;color:#000;font-family:'Liberation Sans',sans-serif;">2012-1-2</div>
<div class="t" style="left:124.0px;top:258px;width:171px;text-align:center;font-size:14.67px;line-height:22px;color:#000;font-family:'Liberation Sans',sans-serif;">A类费用</div>
<div class="t" style="left:255.0px;top:258px;width:179px;text-align:center;font-size:14.67px;line-height:22px;color:#000;font-family:'Liberation Sans',sans-serif;">低值易耗品摊销</div>
<div class="t" style="left:394.0px;top:258px;width:142px;text-align:center;font-size:14.67px;line-height:22px;color:#000;font-family:'Liberation Sans',sans-serif;">销售部</div>
<div class="t" style="left:496.0px;top:258px;width:154px;text-align:center;font-size:14.67px;line-height:22px;color:#000;font-family:'Liberation Sans',sans-serif;">500</div>
<div style="left:28px;top:280px;width:602px;height:22px;background:#d9d9d9"></div>
<div style="left:0px;top:301px;width:28px;height:1px;background:#d6d6d6"></div>
<div class="t" style="left:0.75px;top:284px;width:28px;text-align:center;font-size:14px;line-height:22px;color:#4a4a4a;font-family:'Liberation Serif',serif;letter-spacing:1.5px">4</div>
<div class="t" style="left:8.0px;top:280px;width:156px;text-align:center;font-size:14.67px;line-height:22px;color:#000;font-family:'Liberation Sans',sans-serif;">2012-1-3</div>
<div class="t" style="left:124.0px;top:280px;width:171px;text-align:center;font-size:14.67px;line-height:22px;color:#000;font-family:'Liberation Sans',sans-serif;">A类费用</div>
<div class="t" style="left:255.0px;top:280px;width:179px;text-align:center;font-size:14.67px;line-height:22px;color:#000;font-family:'Liberation Sans',sans-serif;">会议费</div>
<div class="t" style="left:394.0px;top:280px;width:142px;text-align:center;font-size:14.67px;line-height:22px;color:#000;font-family:'Liberation Sans',sans-serif;">销售部</div>
<div class="t" style="left:496.0px;top:280px;width:154px;text-align:center;font-size:14.67px;line-height:22px;color:#000;font-family:'Liberation Sans',sans-serif;">800</div>
<div style="left:0px;top:323px;width:28px;height:1px;background:#d6d6d6"></div>
<div class="t" style="left:0.75px;top:306px;width:28px;text-align:center;font-size:14px;line-height:22px;color:#4a4a4a;font-family:'Liberation Serif',serif;letter-spacing:1.5px">5</div>
<div class="t" style="left:8.0px;top:302px;width:156px;text-align:center;font-size:14.67px;line-height:22px;color:#000;font-family:'Liberation Sans',sans-serif;">2012-1-4</div>
<div class="t" style="left:124.0px;top:302px;width:171px;text-align:center;font-size:14.67px;line-height:22px;color:#000;font-family:'Liberation Sans',sans-serif;">A类费用</div>
<div class="t" style="left:255.0px;top:302px;width:179px;text-align:center;font-size:14.67px;line-height:22px;color:#000;font-family:'Liberation Sans',sans-serif;">办公费</div>
<div class="t" style="left:394.0px;top:302px;width:142px;text-align:center;font-size:14.67px;line-height:22px;color:#000;font-family:'Liberation Sans',sans-serif;">销售部</div>
<div class="t" style="left:496.0px;top:302px;width:154px;text-align:center;font-size:14.67px;line-height:22px;color:#000;font-family:'Liberation Sans',sans-serif;">1250</div>
<div style="left:28px;top:324px;width:602px;height:22px;background:#d9d9d9"></div>
<div style="left:0px;top:345px;width:28px;height:1px;background:#d6d6d6"></div>
<div class="t" style="left:0.75px;top:328px;width:28px;text-align:center;font-size:14px;line-height:22px;color:#4a4a4a;font-family:'Liberation Serif',serif;letter-spacing:1.5px">6</div>
<div class="t" style="left:8.0px;top:324px;width:156px;text-align:center;font-size:14.67px;line-height:22px;color:#000;font-family:'Liberation Sans',sans-serif;">2012-1-5</div>
<div class="t" style="left:124.0px;top:324px;width:171px;text-align:center;font-size:14.67px;line-height:22px;color:#000;font-family:'Liberation Sans',sans-serif;">A类费用</div>
<div class="t" style="left:255.0px;top:324px;width:179px;text-align:center;font-size:14.67px;line-height:22px;color:#000;font-family:'Liberation Sans',sans-serif;">车辆费用</div>
<div class="t" style="left:394.0px;top:324px;width:142px;text-align:center;font-size:14.67px;line-height:22px;color:#000;font-family:'Liberation Sans',sans-serif;">销售部</div>
<div class="t" style="left:496.0px;top:324px;width:154px;text-align:center;font-size:14.67px;line-height:22px;color:#000;font-family:'Liberation Sans',sans-serif;">836</div>
<div style="left:0px;top:367px;width:28px;height:1px;background:#d6d6d6"></div>
<div class="t" style="left:0.75px;top:350px;width:28px;text-align:center;font-size:14px;line-height:22px;color:#4a4a4a;font-family:'Liberation Serif',serif;letter-spacing:1.5px">7</div>
<div class="t" style="left:8.0px;top:346px;width:156px;text-align:center;font-size:14.67px;line-height:22px;color:#000;font-family:'Liberation Sans',sans-serif;">2012-1-6</div>
<div class="t" style="left:124.0px;top:346px;width:171px;text-align:center;font-size:14.67px;line-height:22px;color:#000;font-family:'Liberation Sans',sans-serif;">A类费用</div>
<div class="t" style="left:255.0px;top:346px;width:179px;text-align:center;font-size:14.67px;line-height:22px;color:#000;font-family:'Liberation Sans',sans-serif;">差旅费</div>
<div class="t" style="left:394.0px;top:346px;width:142px;text-align:center;font-size:14.67px;line-height:22px;color:#000;font-family:'Liberation Sans',sans-serif;">销售部</div>
<div class="t" style="left:496.0px;top:346px;width:154px;text-align:center;font-size:14.67px;line-height:22px;color:#000;font-family:'Liberation Sans',sans-serif;">7800</div>
<div style="left:28px;top:368px;width:602px;height:22px;background:#d9d9d9"></div>
<div style="left:0px;top:389px;width:28px;height:1px;background:#d6d6d6"></div>
<div class="t" style="left:0.75px;top:372px;width:28px;text-align:center;font-size:14px;line-height:22px;color:#4a4a4a;font-family:'Liberation Serif',serif;letter-spacing:1.5px">8</div>
<div class="t" style="left:8.0px;top:368px;width:156px;text-align:center;font-size:14.67px;line-height:22px;color:#000;font-family:'Liberation Sans',sans-serif;">2012-1-7</div>
<div class="t" style="left:124.0px;top:368px;width:171px;text-align:center;font-size:14.67px;line-height:22px;color:#000;font-family:'Liberation Sans',sans-serif;">B类费用</div>
<div class="t" style="left:255.0px;top:368px;width:179px;text-align:center;font-size:14.67px;line-height:22px;color:#000;font-family:'Liberation Sans',sans-serif;">水电费</div>
<div class="t" style="left:394.0px;top:368px;width:142px;text-align:center;font-size:14.67px;line-height:22px;color:#000;font-family:'Liberation Sans',sans-serif;">销售部</div>
<div class="t" style="left:496.0px;top:368px;width:154px;text-align:center;font-size:14.67px;line-height:22px;color:#000;font-family:'Liberation Sans',sans-serif;">520</div>
<div style="left:0px;top:411px;width:28px;height:1px;background:#d6d6d6"></div>
<div class="t" style="left:0.75px;top:394px;width:28px;text-align:center;font-size:14px;line-height:22px;color:#4a4a4a;font-family:'Liberation Serif',serif;letter-spacing:1.5px">9</div>
<div class="t" style="left:8.0px;top:390px;width:156px;text-align:center;font-size:14.67px;line-height:22px;color:#000;font-family:'Liberation Sans',sans-serif;">2012-1-8</div>
<div class="t" style="left:124.0px;top:390px;width:171px;text-align:center;font-size:14.67px;line-height:22px;color:#000;font-family:'Liberation Sans',sans-serif;">C类费用</div>
<div class="t" style="left:255.0px;top:390px;width:179px;text-align:center;font-size:14.67px;line-height:22px;color:#000;font-family:'Liberation Sans',sans-serif;">物业管理费</div>
<div class="t" style="left:394.0px;top:390px;width:142px;text-align:center;font-size:14.67px;line-height:22px;color:#000;font-family:'Liberation Sans',sans-serif;">销售部</div>
<div class="t" style="left:496.0px;top:390px;width:154px;text-align:center;font-size:14.67px;line-height:22px;color:#000;font-family:'Liberation Sans',sans-serif;">138</div>
<div style="left:28px;top:412px;width:602px;height:22px;background:#d9d9d9"></div>
<div style="left:0px;top:433px;width:28px;height:1px;background:#d6d6d6"></div>
<div class="t" style="left:0.75px;top:416px;width:28px;text-align:center;font-size:14px;line-height:22px;color:#4a4a4a;font-family:'Liberation Serif',serif;letter-spacing:1.5px">10</div>
<div class="t" style="left:8.0px;top:412px;width:156px;text-align:center;font-size:14.67px;line-height:22px;color:#000;font-family:'Liberation Sans',sans-serif;">2012-1-9</div>
<div class="t" style="left:124.0px;top:412px;width:171px;text-align:center;font-size:14.67px;line-height:22px;color:#000;font-family:'Liberation Sans',sans-serif;">A类费用</div>
<div class="t" style="left:255.0px;top:412px;width:179px;text-align:center;font-size:14.67px;line-height:22px;color:#000;font-family:'Liberation Sans',sans-serif;">业务招待费</div>
<div class="t" style="left:394.0px;top:412px;width:142px;text-align:center;font-size:14.67px;line-height:22px;color:#000;font-family:'Liberation Sans',sans-serif;">综合管理办</div>
<div class="t" style="left:496.0px;top:412px;width:154px;text-align:center;font-size:14.67px;line-height:22px;color:#000;font-family:'Liberation Sans',sans-serif;">4200</div>
<div style="left:0px;top:455px;width:28px;height:1px;background:#d6d6d6"></div>
<div class="t" style="left:0.75px;top:438px;width:28px;text-align:center;font-size:14px;line-height:22px;color:#4a4a4a;font-family:'Liberation Serif',serif;letter-spacing:1.5px">11</div>
<div class="t" style="left:8.0px;top:434px;width:156px;text-align:center;font-size:14.67px;line-height:22px;color:#000;font-family:'Liberation Sans',sans-serif;">2012-1-10</div>
<div class="t" style="left:124.0px;top:434px;width:171px;text-align:center;font-size:14.67px;line-height:22px;color:#000;font-family:'Liberation Sans',sans-serif;">A类费用</div>
<div class="t" style="left:255.0px;top:434px;width:179px;text-align:center;font-size:14.67px;line-height:22px;color:#000;font-family:'Liberation Sans',sans-serif;">会议费</div>
<div class="t" style="left:394.0px;top:434px;width:142px;text-align:center;font-size:14.67px;line-height:22px;color:#000;font-family:'Liberation Sans',sans-serif;">综合管理办</div>
<div class="t" style="left:496.0px;top:434px;width:154px;text-align:center;font-size:14.67px;line-height:22px;color:#000;font-family:'Liberation Sans',sans-serif;">1585.8</div>
<div style="left:28px;top:456px;width:602px;height:22px;background:#d9d9d9"></div>
<div style="left:0px;top:477px;width:28px;height:1px;background:#d6d6d6"></div>
<div class="t" style="left:0.75px;top:460px;width:28px;text-align:center;font-size:14px;line-height:22px;color:#4a4a4a;font-family:'Liberation Serif',serif;letter-spacing:1.5px">12</div>
<div class="t" style="left:8.0px;top:456px;width:156px;text-align:center;font-size:14.67px;line-height:22px;color:#000;font-family:'Liberation Sans',sans-serif;">2012-1-11</div>
<div class="t" style="left:124.0px;top:456px;width:171px;text-align:center;font-size:14.67px;line-height:22px;color:#000;font-family:'Liberation Sans',sans-serif;">A类费用</div>
<div class="t" style="left:255.0px;top:456px;width:179px;text-align:center;font-size:14.67px;line-height:22px;color:#000;font-family:'Liberation Sans',sans-serif;">办公费</div>
<div class="t" style="left:394.0px;top:456px;width:142px;text-align:center;font-size:14.67px;line-height:22px;color:#000;font-family:'Liberation Sans',sans-serif;">综合管理办</div>
<div class="t" style="left:496.0px;top:456px;width:154px;text-align:center;font-size:14.67px;line-height:22px;color:#000;font-family:'Liberation Sans',sans-serif;">850</div>
<div style="left:0px;top:499px;width:28px;height:1px;background:#d6d6d6"></div>
<div class="t" style="left:0.75px;top:482px;width:28px;text-align:center;font-size:14px;line-height:22px;color:#4a4a4a;font-family:'Liberation Serif',serif;letter-spacing:1.5px">13</div>
<div class="t" style="left:8.0px;top:478px;width:156px;text-align:center;font-size:14.67px;line-height:22px;color:#000;font-family:'Liberation Sans',sans-serif;">2012-1-12</div>
<div class="t" style="left:124.0px;top:478px;width:171px;text-align:center;font-size:14.67px;line-height:22px;color:#000;font-family:'Liberation Sans',sans-serif;">A类费用</div>
<div class="t" style="left:255.0px;top:478px;width:179px;text-align:center;font-size:14.67px;line-height:22px;color:#000;font-family:'Liberation Sans',sans-serif;">车辆费用</div>
<div class="t" style="left:394.0px;top:478px;width:142px;text-align:center;font-size:14.67px;line-height:22px;color:#000;font-family:'Liberation Sans',sans-serif;">综合管理办</div>
<div class="t" style="left:496.0px;top:478px;width:154px;text-align:center;font-size:14.67px;line-height:22px;color:#000;font-family:'Liberation Sans',sans-serif;">1200</div>
<div style="left:28px;top:500px;width:602px;height:22px;background:#d9d9d9"></div>
<div style="left:0px;top:521px;width:28px;height:1px;background:#d6d6d6"></div>
<div class="t" style="left:0.75px;top:504px;width:28px;text-align:center;font-size:14px;line-height:22px;color:#4a4a4a;font-family:'Liberation Serif',serif;letter-spacing:1.5px">14</div>
<div class="t" style="left:8.0px;top:500px;width:156px;text-align:center;font-size:14.67px;line-height:22px;color:#000;font-family:'Liberation Sans',sans-serif;">2012-1-13</div>
<div class="t" style="left:124.0px;top:500px;width:171px;text-align:center;font-size:14.67px;line-height:22px;color:#000;font-family:'Liberation Sans',sans-serif;">A类费用</div>
<div class="t" style="left:255.0px;top:500px;width:179px;text-align:center;font-size:14.67px;line-height:22px;color:#000;font-family:'Liberation Sans',sans-serif;">差旅费</div>
<div class="t" style="left:394.0px;top:500px;width:142px;text-align:center;font-size:14.67px;line-height:22px;color:#000;font-family:'Liberation Sans',sans-serif;">综合管理办</div>
<div class="t" style="left:496.0px;top:500px;width:154px;text-align:center;font-size:14.67px;line-height:22px;color:#000;font-family:'Liberation Sans',sans-serif;">4500</div>
<div style="left:0px;top:543px;width:28px;height:1px;background:#d6d6d6"></div>
<div class="t" style="left:0.75px;top:526px;width:28px;text-align:center;font-size:14px;line-height:22px;color:#4a4a4a;font-family:'Liberation Serif',serif;letter-spacing:1.5px">15</div>
<div class="t" style="left:8.0px;top:522px;width:156px;text-align:center;font-size:14.67px;line-height:22px;color:#000;font-family:'Liberation Sans',sans-serif;">2012-1-14</div>
<div class="t" style="left:124.0px;top:522px;width:171px;text-align:center;font-size:14.67px;line-height:22px;color:#000;font-family:'Liberation Sans',sans-serif;">B类费用</div>
<div class="t" style="left:255.0px;top:522px;width:179px;text-align:center;font-size:14.67px;line-height:22px;color:#000;font-family:'Liberation Sans',sans-serif;">水电费</div>
<div class="t" style="left:394.0px;top:522px;width:142px;text-align:center;font-size:14.67px;line-height:22px;color:#000;font-family:'Liberation Sans',sans-serif;">综合管理办</div>
<div class="t" style="left:496.0px;top:522px;width:154px;text-align:center;font-size:14.67px;line-height:22px;color:#000;font-family:'Liberation Sans',sans-serif;">300</div>
<div style="left:28px;top:544px;width:602px;height:22px;background:#d9d9d9"></div>
<div style="left:0px;top:565px;width:28px;height:1px;background:#d6d6d6"></div>
<div class="t" style="left:0.75px;top:548px;width:28px;text-align:center;font-size:14px;line-height:22px;color:#4a4a4a;font-family:'Liberation Serif',serif;letter-spacing:1.5px">16</div>
<div class="t" style="left:8.0px;top:544px;width:156px;text-align:center;font-size:14.67px;line-height:22px;color:#000;font-family:'Liberation Sans',sans-serif;">2012-1-15</div>
<div class="t" style="left:124.0px;top:544px;width:171px;text-align:center;font-size:14.67px;line-height:22px;color:#000;font-family:'Liberation Sans',sans-serif;">C类费用</div>
<div class="t" style="left:255.0px;top:544px;width:179px;text-align:center;font-size:14.67px;line-height:22px;color:#000;font-family:'Liberation Sans',sans-serif;">其他</div>
<div class="t" style="left:394.0px;top:544px;width:142px;text-align:center;font-size:14.67px;line-height:22px;color:#000;font-family:'Liberation Sans',sans-serif;">综合管理办</div>
<div class="t" style="left:496.0px;top:544px;width:154px;text-align:center;font-size:14.67px;line-height:22px;color:#000;font-family:'Liberation Sans',sans-serif;">125.55</div>
<div style="left:0px;top:587px;width:28px;height:1px;background:#d6d6d6"></div>
<div class="t" style="left:0.75px;top:570px;width:28px;text-align:center;font-size:14px;line-height:22px;color:#4a4a4a;font-family:'Liberation Serif',serif;letter-spacing:1.5px">17</div>
<div class="t" style="left:8.0px;top:566px;width:156px;text-align:center;font-size:14.67px;line-height:22px;color:#000;font-family:'Liberation Sans',sans-serif;">2012-1-16</div>
<div class="t" style="left:124.0px;top:566px;width:171px;text-align:center;font-size:14.67px;line-height:22px;color:#000;font-family:'Liberation Sans',sans-serif;">A类费用</div>
<div class="t" style="left:255.0px;top:566px;width:179px;text-align:center;font-size:14.67px;line-height:22px;color:#000;font-family:'Liberation Sans',sans-serif;">业务招待费</div>
<div class="t" style="left:394.0px;top:566px;width:142px;text-align:center;font-size:14.67px;line-height:22px;color:#000;font-family:'Liberation Sans',sans-serif;">物流部</div>
<div class="t" style="left:496.0px;top:566px;width:154px;text-align:center;font-size:14.67px;line-height:22px;color:#000;font-family:'Liberation Sans',sans-serif;">7500</div>
<div style="left:28px;top:588px;width:602px;height:22px;background:#d9d9d9"></div>
<div style="left:0px;top:609px;width:28px;height:1px;background:#d6d6d6"></div>
<div class="t" style="left:0.75px;top:592px;width:28px;text-align:center;font-size:14px;line-height:22px;color:#4a4a4a;font-family:'Liberation Serif',serif;letter-spacing:1.5px">18</div>
<div class="t" style="left:8.0px;top:588px;width:156px;text-align:center;font-size:14.67px;line-height:22px;color:#000;font-family:'Liberation Sans',sans-serif;">2012-1-17</div>
<div class="t" style="left:124.0px;top:588px;width:171px;text-align:center;font-size:14.67px;line-height:22px;color:#000;font-family:'Liberation Sans',sans-serif;">A类费用</div>
<div class="t" style="left:255.0px;top:588px;width:179px;text-align:center;font-size:14.67px;line-height:22px;color:#000;font-family:'Liberation Sans',sans-serif;">会议费</div>
<div class="t" style="left:394.0px;top:588px;width:142px;text-align:center;font-size:14.67px;line-height:22px;color:#000;font-family:'Liberation Sans',sans-serif;">物流部</div>
<div class="t" style="left:496.0px;top:588px;width:154px;text-align:center;font-size:14.67px;line-height:22px;color:#000;font-family:'Liberation Sans',sans-serif;">6800</div>
<div style="left:0px;top:631px;width:28px;height:1px;background:#d6d6d6"></div>
<div class="t" style="left:0.75px;top:614px;width:28px;text-align:center;font-size:14px;line-height:22px;color:#4a4a4a;font-family:'Liberation Serif',serif;letter-spacing:1.5px">19</div>
<div class="t" style="left:8.0px;top:610px;width:156px;text-align:center;font-size:14.67px;line-height:22px;color:#000;font-family:'Liberation Sans',sans-serif;">2012-1-18</div>
<div class="t" style="left:124.0px;top:610px;width:171px;text-align:center;font-size:14.67px;line-height:22px;color:#000;font-family:'Liberation Sans',sans-serif;">A类费用</div>
<div class="t" style="left:255.0px;top:610px;width:179px;text-align:center;font-size:14.67px;line-height:22px;color:#000;font-family:'Liberation Sans',sans-serif;">办公费</div>
<div class="t" style="left:394.0px;top:610px;width:142px;text-align:center;font-size:14.67px;line-height:22px;color:#000;font-family:'Liberation Sans',sans-serif;">物流部</div>
<div class="t" style="left:496.0px;top:610px;width:154px;text-align:center;font-size:14.67px;line-height:22px;color:#000;font-family:'Liberation Sans',sans-serif;">1254</div>
<div style="left:28px;top:632px;width:602px;height:22px;background:#d9d9d9"></div>
<div style="left:0px;top:653px;width:28px;height:1px;background:#d6d6d6"></div>
<div class="t" style="left:0.75px;top:636px;width:28px;text-align:center;font-size:14px;line-height:22px;color:#4a4a4a;font-family:'Liberation Serif',serif;letter-spacing:1.5px">20</div>
<div class="t" style="left:8.0px;top:632px;width:156px;text-align:center;font-size:14.67px;line-height:22px;color:#000;font-family:'Liberation Sans',sans-serif;">2012-1-19</div>
<div class="t" style="left:124.0px;top:632px;width:171px;text-align:center;font-size:14.67px;line-height:22px;color:#000;font-family:'Liberation Sans',sans-serif;">A类费用</div>
<div class="t" style="left:255.0px;top:632px;width:179px;text-align:center;font-size:14.67px;line-height:22px;color:#000;font-family:'Liberation Sans',sans-serif;">车辆费用</div>
<div class="t" style="left:394.0px;top:632px;width:142px;text-align:center;font-size:14.67px;line-height:22px;color:#000;font-family:'Liberation Sans',sans-serif;">物流部</div>
<div class="t" style="left:496.0px;top:632px;width:154px;text-align:center;font-size:14.67px;line-height:22px;color:#000;font-family:'Liberation Sans',sans-serif;">1471.5</div>
</div>
<div style="left:28px;top:216px;width:1px;height:19px;background:#d4d4d4"></div>
<div style="left:28px;top:235px;width:1px;height:408px;background:#a3a3a3"></div>
<div style="left:28px;top:235px;width:1230px;height:1px;background:#a3a3a3"></div>
<div style="left:0px;top:235px;width:28px;height:1px;background:#c6c6c6"></div>
<svg style="position:absolute;left:15px;top:223px;" width="11" height="9" viewBox="0 0 11 9"><path d="M10 0V9H0Z" fill="#dfdfdf"/></svg>
<div class="t" style="left:33px;top:220px;font-size:14.67px;line-height:14.67px;color:#333;font-family:'Liberation Sans',sans-serif;">月份</div>
<div style="left:127px;top:219px;width:17px;height:17px;background:#fff;border:1px solid #c6c6c6;box-sizing:border-box"></div>
<svg style="position:absolute;left:132.5px;top:226px;" width="6" height="3" viewBox="0 0 6 3"><path d="M0 0H6L3.0 3Z" fill="#555"/></svg>
<div class="t" style="left:149px;top:220px;font-size:14.67px;line-height:14.67px;color:#333;font-family:'Liberation Sans',sans-serif;">费用监控类型</div>
<div style="left:258px;top:219px;width:17px;height:17px;background:#fff;border:1px solid #c6c6c6;box-sizing:border-box"></div>
<svg style="position:absolute;left:263.5px;top:226px;" width="6" height="3" viewBox="0 0 6 3"><path d="M0 0H6L3.0 3Z" fill="#555"/></svg>
<div class="t" style="left:280px;top:220px;font-size:14.67px;line-height:14.67px;color:#333;font-family:'Liberation Sans',sans-serif;">项目内容</div>
<div style="left:397px;top:219px;width:17px;height:17px;background:#fff;border:1px solid #c6c6c6;box-sizing:border-box"></div>
<svg style="position:absolute;left:402.5px;top:226px;" width="6" height="3" viewBox="0 0 6 3"><path d="M0 0H6L3.0 3Z" fill="#555"/></svg>
<div class="t" style="left:419px;top:220px;font-size:14.67px;line-height:14.67px;color:#333;font-family:'Liberation Sans',sans-serif;">使用部门</div>
<div style="left:499px;top:219px;width:17px;height:17px;background:#fff;border:1px solid #c6c6c6;box-sizing:border-box"></div>
<svg style="position:absolute;left:504.5px;top:226px;" width="6" height="3" viewBox="0 0 6 3"><path d="M0 0H6L3.0 3Z" fill="#555"/></svg>
<div class="t" style="left:521px;top:220px;font-size:14.67px;line-height:14.67px;color:#333;font-family:'Liberation Sans',sans-serif;">发生金额</div>
<div style="left:613px;top:219px;width:17px;height:17px;background:#fff;border:1px solid #c6c6c6;box-sizing:border-box"></div>
<svg style="position:absolute;left:618.5px;top:226px;" width="6" height="3" viewBox="0 0 6 3"><path d="M0 0H6L3.0 3Z" fill="#555"/></svg>
<div class="t" style="left:630.0px;top:222px;width:72px;text-align:center;font-size:14px;line-height:14px;color:#4a4a4a;font-family:'Liberation Serif',serif;">F</div>
<div style="left:701px;top:216px;width:1px;height:19px;background:#dadada"></div>
<div class="t" style="left:702.0px;top:222px;width:72px;text-align:center;font-size:14px;line-height:14px;color:#4a4a4a;font-family:'Liberation Serif',serif;">G</div>
<div style="left:773px;top:216px;width:1px;height:19px;background:#dadada"></div>
<div class="t" style="left:774.0px;top:222px;width:72px;text-align:center;font-size:14px;line-height:14px;color:#4a4a4a;font-family:'Liberation Serif',serif;">H</div>
<div style="left:845px;top:216px;width:1px;height:19px;background:#dadada"></div>
<div class="t" style="left:846.0px;top:222px;width:72px;text-align:center;font-size:14px;line-height:14px;color:#4a4a4a;font-family:'Liberation Serif',serif;">I</div>
<div style="left:917px;top:216px;width:1px;height:19px;background:#dadada"></div>
<div class="t" style="left:918.0px;top:222px;width:72px;text-align:center;font-size:14px;line-height:14px;color:#4a4a4a;font-family:'Liberation Serif',serif;">J</div>
<div style="left:989px;top:216px;width:1px;height:19px;background:#dadada"></div>
<div class="t" style="left:990.0px;top:222px;width:72px;text-align:center;font-size:14px;line-height:14px;color:#4a4a4a;font-family:'Liberation Serif',serif;">K</div>
<div style="left:1061px;top:216px;width:1px;height:19px;background:#dadada"></div>
<div class="t" style="left:1062.0px;top:222px;width:72px;text-align:center;font-size:14px;line-height:14px;color:#4a4a4a;font-family:'Liberation Serif',serif;">L</div>
<div style="left:1133px;top:216px;width:1px;height:19px;background:#dadada"></div>
<div class="t" style="left:1134.0px;top:222px;width:72px;text-align:center;font-size:14px;line-height:14px;color:#4a4a4a;font-family:'Liberation Serif',serif;">M</div>
<div style="left:1205px;top:216px;width:1px;height:19px;background:#dadada"></div>
<div class="t" style="left:1206.0px;top:222px;width:72px;text-align:center;font-size:14px;line-height:14px;color:#4a4a4a;font-family:'Liberation Serif',serif;">N</div>
<div style="left:1257px;top:235px;width:1px;height:408px;background:#ababab"></div>
<div style="left:0px;top:643px;width:1258px;height:1px;background:#ababab"></div>
<div style="left:748px;top:302px;width:410px;height:133px;background:#fff;border:1px solid #b4b4b4;box-sizing:border-box"></div>
<div class="t" style="left:902px;top:355px;font-size:26px;line-height:26px;color:#b3131c;font-family:'Liberation Sans',sans-serif;font-weight:bold">可视筛选</div>
<div style="left:1258px;top:235px;width:21px;height:394px;background:#f6f6f6"></div>
<div style="left:1258px;top:216px;width:21px;height:19px;background:#fff"></div>
<div style="left:1261px;top:220px;width:15px;height:15px;background:#fff;border:1px solid #ababab;box-sizing:border-box"></div>
<svg style="position:absolute;left:1265px;top:225px;" width="7" height="4" viewBox="0 0 7 4"><path d="M0 4H7L3.5 0Z" fill="#555"/></svg>
<div style="left:1261px;top:240px;width:15px;height:87px;background:#fff;border:1px solid #ababab;box-sizing:border-box"></div>
<div style="left:1261px;top:629px;width:15px;height:15px;background:#fff;border:1px solid #ababab;box-sizing:border-box"></div>
<svg style="position:absolute;left:1265px;top:634px;" width="7" height="4" viewBox="0 0 7 4"><path d="M0 0H7L3.5 4Z" fill="#555"/></svg>
<div style="left:0px;top:644px;width:1259px;height:27px;background:#f5f5f5"></div>
<div style="left:1259px;top:644px;width:20px;height:27px;background:#f5f5f5"></div>
<svg style="position:absolute;left:26px;top:652px;" width="5" height="8" viewBox="0 0 5 8"><path d="M4.5 0V8L0 4Z" fill="#c6c6c6"/></svg>
<svg style="position:absolute;left:56px;top:652px;" width="5" height="8" viewBox="0 0 5 8"><path d="M0 0V8L4.5 4Z" fill="#c6c6c6"/></svg>
<div style="left:100px;top:647px;width:1px;height:20px;background:#c6c6c6"></div>
<div class="t" style="left:113.5px;top:648px;font-size:13.5px;line-height:13.5px;color:#444;font-family:'Liberation Sans',sans-serif;">Sheet1</div>
<div style="left:169px;top:643px;width:128px;height:25px;background:#fff;border-left:1px solid #c6c6c6;border-right:1px solid #c6c6c6;box-sizing:border-box"></div>
<div style="left:169px;top:666px;width:128px;height:1px;background:#217346"></div>
<div style="left:169px;top:667px;width:128px;height:1px;background:#217346"></div>
<div class="t" style="left:181px;top:649.5px;font-size:13px;line-height:13px;color:#217346;font-family:'Liberation Sans',sans-serif;">一季度费用明细表</div>
<svg style="position:absolute;left:329px;top:648px;" width="18" height="18" viewBox="0 0 18 18"><circle cx="8.5" cy="8.5" r="7.5" fill="none" stroke="#777" stroke-width="1.2"/><path d="M8.5 4.5v8M4.5 8.5h8" stroke="#777" stroke-width="1.6"/></svg>
<div style="left:1239px;top:653px;width:2px;height:2px;background:#999"></div>
<div style="left:1239px;top:657px;width:2px;height:2px;background:#999"></div>
<div style="left:1239px;top:661px;width:2px;height:2px;background:#999"></div>
<div style="left:0px;top:671px;width:1280px;height:17px;background:#217346"></div>
<div class="t" style="left:7px;top:676px;font-size:12px;line-height:12px;color:#fff;font-family:'Liberation Sans',sans-serif;">就绪</div>
<svg style="position:absolute;left:51px;top:674px;" width="14" height="14" viewBox="0 0 14 14"><path d="M7 2.5h5.5v11.5" stroke="#fff" stroke-width="1.3" fill="none"/><rect x="1" y="6.5" width="12" height="7.5" fill="#fff"/><path d="M1 9h12M1 11.5h12M4.8 6.5v7.5M8.8 6.5v7.5" stroke="#217346" stroke-width="1"/><circle cx="3.5" cy="3.5" r="3" fill="#fff"/><circle cx="3.5" cy="3.5" r="1.1" fill="#8fb09d"/></svg>
<div style="left:971px;top:671px;width:38px;height:17px;background:#17633a"></div>
<svg style="position:absolute;left:983px;top:675px;" width="14" height="13" viewBox="0 0 14 13"><path d="M0.5 0v13M4.5 0v13M8.5 0v13M12.5 0v13M0 0.5h13M0 4.5h13M0 8.5h13M0 12.5h13" stroke="#fff"/></svg>
<svg style="position:absolute;left:1021px;top:675px;" width="14" height="13" viewBox="0 0 14 13"><rect x="0.5" y="0.5" width="13" height="13" fill="none" stroke="#fff"/><rect x="2.5" y="2.5" width="9" height="11" fill="none" stroke="#fff"/><path d="M4.5 5h5M4.5 7.5h5M4.5 10h5" stroke="#fff"/></svg>
<svg style="position:absolute;left:1058px;top:675px;" width="15" height="13" viewBox="0 0 15 13"><rect x="0.5" y="0.5" width="14" height="13" fill="none" stroke="#fff"/><rect x="1" y="1" width="13" height="7.5" fill="#fff"/><path d="M5.5 1v7" stroke="#217346" stroke-width="1"/></svg>
<div style="left:1090px;top:681px;width:6px;height:1px;background:#fff"></div>
<div style="left:1090px;top:680px;width:6px;height:2px;background:#fff"></div>
<div style="left:1100px;top:681px;width:100px;height:1px;background:#fff"></div>
<div style="left:1148px;top:676px;width:4px;height:12px;background:#fff"></div>
<div style="left:1204px;top:680px;width:9px;height:2px;background:#fff"></div>
<div style="left:1207.5px;top:676.5px;width:2px;height:9px;background:#fff"></div>
<div class="t" style="left:1227.5px;top:675px;font-size:13px;line-height:13px;color:#fff;font-family:'Liberation Sans',sans-serif;">100%</div>
</body></html>
